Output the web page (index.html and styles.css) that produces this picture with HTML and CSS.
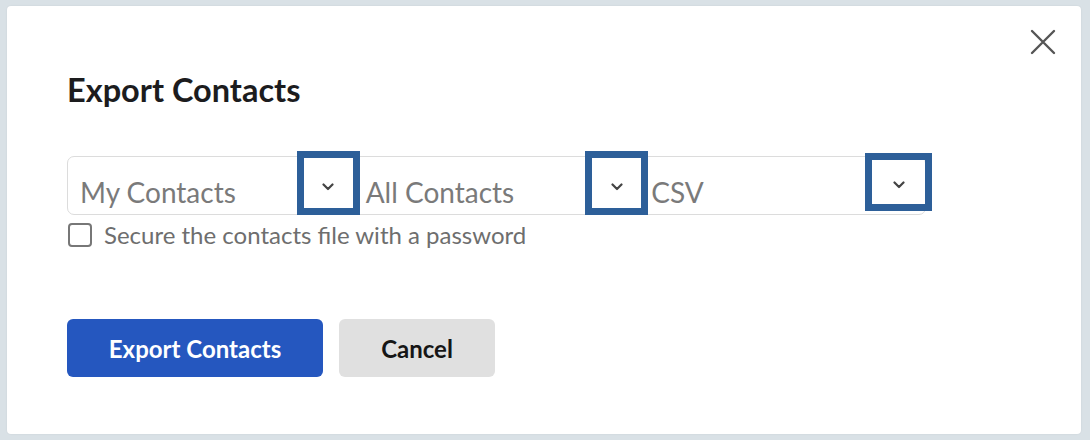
FILE: index.html
```html
<!DOCTYPE html>
<html lang="en">
<head>
<meta charset="utf-8">
<title>Export Contacts</title>
<link rel="stylesheet" href="styles.css">
</head>
<body>
<div class="dialog">
  <button class="close" aria-label="Close">
    <svg width="26" height="26" viewBox="0 0 26 26"><path d="M2 2 L24 24 M24 2 L2 24" stroke="#555" stroke-width="2.4" fill="none" stroke-linecap="round"/></svg>
  </button>
  <h1 class="title">Export Contacts</h1>
  <div class="selects">
    <div class="sel">
      <span class="sel-text">My Contacts</span>
      <span class="arrow"><svg width="12" height="8" viewBox="0 0 12 8"><path d="M1.5 1.5 L6 6 L10.5 1.5" stroke="#444" stroke-width="2.2" fill="none" stroke-linecap="round" stroke-linejoin="round"/></svg></span>
    </div>
    <div class="sel">
      <span class="sel-text">All Contacts</span>
      <span class="arrow arrow-mid"><svg width="12" height="8" viewBox="0 0 12 8"><path d="M1.5 1.5 L6 6 L10.5 1.5" stroke="#444" stroke-width="2.2" fill="none" stroke-linecap="round" stroke-linejoin="round"/></svg></span>
    </div>
    <div class="sel">
      <span class="sel-text">CSV</span>
      <span class="arrow arrow-last"><svg width="12" height="8" viewBox="0 0 12 8"><path d="M1.5 1.5 L6 6 L10.5 1.5" stroke="#444" stroke-width="2.2" fill="none" stroke-linecap="round" stroke-linejoin="round"/></svg></span>
    </div>
  </div>
  <label class="check">
    <span class="box"></span>
    <span class="check-text">Secure the contacts file with a password</span>
  </label>
  <div class="actions">
    <button class="btn btn-primary">Export Contacts</button>
    <button class="btn btn-secondary">Cancel</button>
  </div>
</div>
</body>
</html>
```

FILE: styles.css
```css
html, body {
  margin: 0;
  padding: 0;
}
body {
  background: #d9e1e6;
  width: 1090px;
  height: 440px;
  padding: 6px 9px 6px 7px;
  box-sizing: border-box;
  font-family: Lato, "Open Sans", sans-serif;
}
.dialog {
  position: relative;
  background: #fff;
  height: 428px;
  border-radius: 4px;
  box-shadow: 0 0 2px rgba(0,0,0,0.08);
  padding: 0 0 0 60px;
  box-sizing: border-box;
}
.close {
  position: absolute;
  top: 23px;
  right: 25px;
  background: none;
  border: 0;
  padding: 0;
  width: 26px;
  height: 26px;
  cursor: pointer;
}
.title {
  margin: 0;
  padding-top: 66px;
  font-size: 32.5px;
  line-height: 36px;
  font-weight: 700;
  color: #1c1c1e;
  letter-spacing: 0;
}
.selects {
  margin-top: 48px;
  width: 859px;
  height: 59px;
  border: 1px solid #dcdcdc;
  border-radius: 7px;
  box-sizing: border-box;
  display: flex;
}
.sel {
  flex: 1;
  display: flex;
  align-items: center;
  min-width: 0;
}
.sel-text {
  flex: 1;
  padding-left: 12px;
  padding-top: 12px;
  font-size: 28px;
  color: #7a7a7a;
  white-space: nowrap;
}
.arrow {
  align-self: flex-start;
  margin-top: 1px;
  margin-right: 1px;
  width: 49px;
  height: 50px;
  outline: 7px solid #2d5f99;
  display: flex;
  align-items: center;
  justify-content: center;
  padding-top: 8px;
  box-sizing: border-box;
}
.arrow-mid {
  margin-right: -2px;
}
.arrow-last {
  width: 53px;
  margin-top: 3px;
  height: 44px;
  margin-right: 0;
  padding-top: 6px;
}
.check {
  display: flex;
  align-items: center;
  margin-top: 5px;
  gap: 12px;
}
.box {
  width: 24px;
  height: 24px;
  border: 2px solid #777;
  border-radius: 4px;
  box-sizing: border-box;
  margin-left: 1px;
}
.check-text {
  font-size: 24px;
  color: #6e6e6e;
}
.actions {
  margin-top: 70px;
  display: flex;
  gap: 16px;
}
.btn {
  height: 58px;
  border: 0;
  border-radius: 6px;
  font-family: Lato, "Open Sans", sans-serif;
  font-size: 24px;
  font-weight: 700;
  cursor: pointer;
}
.btn-primary {
  width: 256px;
  background: #2557bf;
  color: #fff;
}
.btn-secondary {
  width: 156px;
  background: #e0e0e0;
  color: #161616;
}
```
